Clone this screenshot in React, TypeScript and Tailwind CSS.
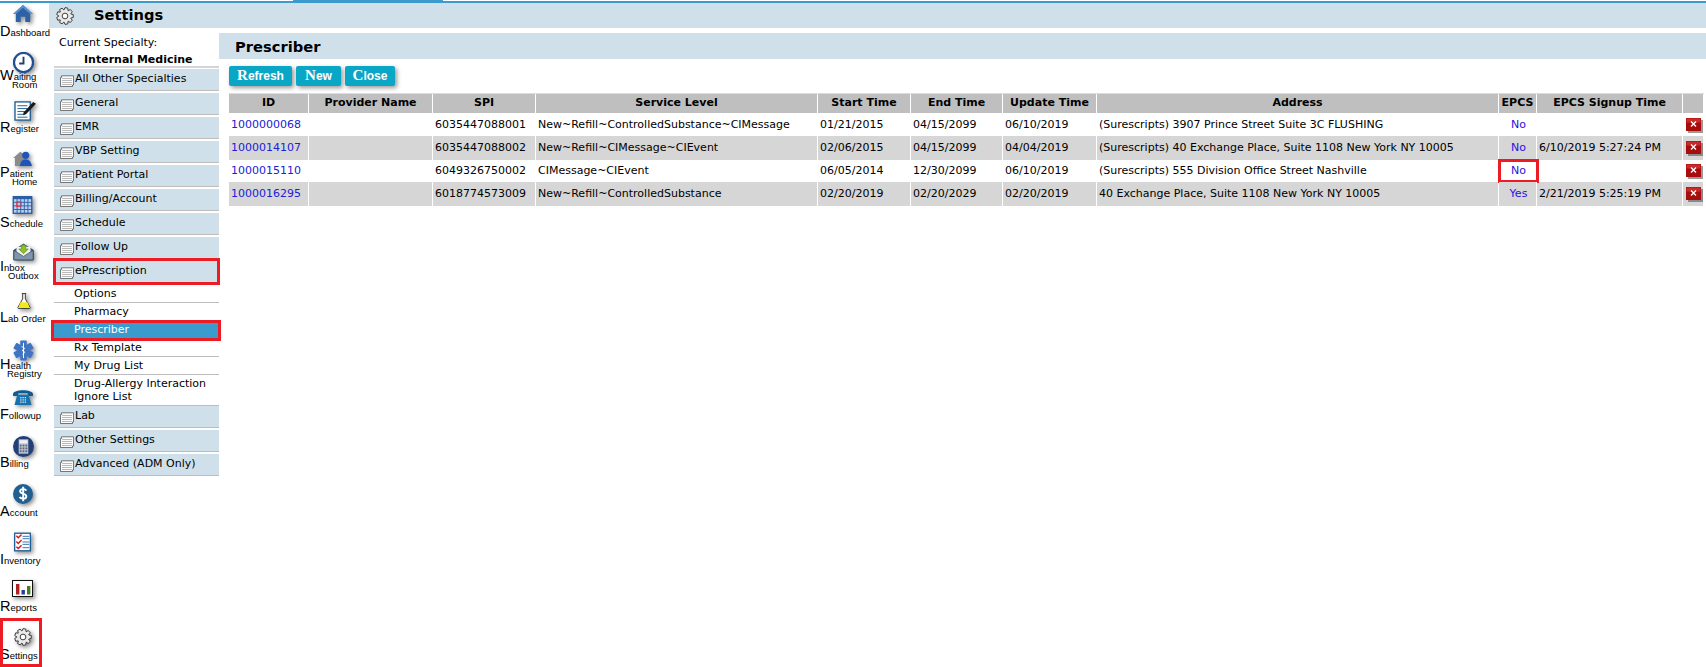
import type { ReactNode } from "react";

const verdana = "font-['DejaVu_Sans',Verdana,sans-serif]";

function Gear({ size = 24 }: { size?: number }) {
  const pts: string[] = [];
  const teeth = 9;
  for (let i = 0; i < teeth; i++) {
    const a = (i / teeth) * Math.PI * 2;
    const w = Math.PI / teeth;
    const p = (r: number, t: number) =>
      `${(12 + r * Math.cos(t)).toFixed(2)},${(12 + r * Math.sin(t)).toFixed(2)}`;
    pts.push(p(8.2, a - w * 0.95), p(11.2, a - w * 0.5), p(11.2, a + w * 0.5), p(8.2, a + w * 0.95));
  }
  return (
    <svg width={size} height={size} viewBox="0 0 24 24">
      <polygon points={pts.join(" ")} fill="#e8e8e8" stroke="#3a3a3a" strokeWidth="1.3" strokeLinejoin="round" />
      <circle cx="12" cy="12" r="3.8" fill="#fff" stroke="#3a3a3a" strokeWidth="1.3" />
    </svg>
  );
}

function HomeIcon() {
  return (
    <svg width="20" height="18" viewBox="0 0 22 20">
      <path d="M11 0 L22 10 L19 10 L19 19 L13.5 19 L13.5 13 L8.5 13 L8.5 19 L3 19 L3 10 L0 10 Z" fill="#2d62a6" />
      <path d="M11 0 L22 10 L19 10 L11 3 L3 10 L0 10 Z" fill="#5b8fd0" />
    </svg>
  );
}

function ClockIcon() {
  return (
    <svg width="21" height="21" viewBox="0 0 22 22">
      <circle cx="11" cy="11" r="10" fill="#fff" stroke="#1f4e96" strokeWidth="2.4" />
      <path d="M11 5 V12 H6.5" fill="none" stroke="#1f3f78" strokeWidth="2" />
    </svg>
  );
}

function RegisterIcon() {
  return (
    <svg width="23" height="21" viewBox="0 0 24 22">
      <rect x="1" y="2" width="16" height="19" fill="#fff" stroke="#1f5e96" strokeWidth="1.4" />
      <path d="M3.5 6 H14 M3.5 9 H14 M3.5 12 H14 M3.5 15 H11 M3.5 18 H14" stroke="#1f5e96" strokeWidth="1" />
      <path d="M10 13 L20 2 L23 4 L12.5 15 L9.5 16 Z" fill="#1a1a1a" />
    </svg>
  );
}

function PatientIcon() {
  return (
    <svg width="20" height="17" viewBox="0 0 22 19">
      <path d="M0 9 L8 2 L14 7 V18 H2 V9 Z" fill="#8b8b8b" />
      <circle cx="14" cy="6" r="4" fill="#1d55b8" />
      <path d="M7.5 18 C8 12 11 10.5 14 10.5 C17 10.5 20 12 21 18 Z" fill="#1d55b8" />
    </svg>
  );
}

function CalendarIcon() {
  return (
    <svg width="21" height="18" viewBox="0 0 22 20">
      <rect x="0" y="0" width="22" height="20" fill="#2a5fa8" />
      {[0, 1, 2, 3].map((r) =>
        [0, 1, 2, 3, 4].map((c) => (
          <rect key={`${r}-${c}`} x={1.5 + c * 4} y={3.5 + r * 4} width="3" height="3" fill="#b8d0ee" />
        ))
      )}
      <rect x="4.5" y="6.5" width="5" height="5" fill="none" stroke="#e8364a" strokeWidth="1" />
    </svg>
  );
}

function InboxIcon() {
  return (
    <svg width="21" height="18" viewBox="0 0 24 20">
      <path d="M1 8 L12 1 L23 8 V19 H1 Z" fill="#4a6688" stroke="#22344c" />
      <path d="M4 4 H20 V12 L12 16 L4 12 Z" fill="#f2f2f2" />
      <path d="M1 8 L12 15 L23 8 V19 H1 Z" fill="#7f95ad" stroke="#22344c" strokeWidth="0.7" />
      <path d="M9.5 2 H14.5 V6.5 H17.5 L12 12 L6.5 6.5 H9.5 Z" fill="#8cc21e" stroke="#4b7a10" strokeWidth="0.6" />
    </svg>
  );
}

function FlaskIcon() {
  return (
    <svg width="14" height="18" viewBox="0 0 16 19">
      <path d="M5.5 1 H10.5 M6.5 1 V7 L1 17 Q0.8 18 2 18 H14 Q15.2 18 15 17 L9.5 7 V1" fill="#fff" stroke="#222" strokeWidth="1" />
      <path d="M4 11 H12 L14.5 17.5 H1.5 Z" fill="#f2ea16" />
    </svg>
  );
}

function StarIcon() {
  return (
    <svg width="21" height="21" viewBox="0 0 22 22">
      {[0, 60, 120].map((a) => (
        <rect key={a} x="7.6" y="0.5" width="6.8" height="21" rx="0.8" fill="#3e74c4" transform={`rotate(${a} 11 11)`} />
      ))}
      <path d="M11 3 V19 M9 7 C13 8 13 9.5 9.5 11 C13 12 13 13.5 10 15" fill="none" stroke="#fff" strokeWidth="1" />
    </svg>
  );
}

function PhoneIcon() {
  return (
    <svg width="22" height="18" viewBox="0 0 22 19">
      <path d="M0.5 6 C1 1 21 1 21.5 6 L21.5 8.5 L16 8.5 L16 5.5 H6 V8.5 L0.5 8.5 Z" fill="#0f5c94" />
      <path d="M5 7 H17 L20 18 H2 Z" fill="#1672ae" />
      {[0, 1, 2].map((r) =>
        [0, 1, 2].map((c) => <rect key={`${r}-${c}`} x={8 + c * 2.4} y={9.5 + r * 2.4} width="1.4" height="1.4" fill="#cfe6f6" />)
      )}
    </svg>
  );
}

function CalculatorIcon() {
  return (
    <svg width="21" height="21" viewBox="0 0 22 22">
      <circle cx="11" cy="11" r="11" fill="#233f78" />
      <rect x="6" y="3.5" width="10" height="15" fill="#c6ccd8" />
      <rect x="7" y="4.5" width="8" height="3" fill="#eef0f5" />
      {[0, 1, 2].map((r) =>
        [0, 1, 2].map((c) => <rect key={`${r}-${c}`} x={7 + c * 3} y={9 + r * 3} width="2" height="2" fill="#5b6478" />)
      )}
    </svg>
  );
}

function CoinIcon() {
  return (
    <svg width="20" height="20" viewBox="0 0 21 21">
      <circle cx="10.5" cy="10.5" r="10.5" fill="#1f5f92" />
      <path d="M14 7 C13 4.8 7.5 4.8 7.5 7.6 C7.5 10.8 14 9.6 14 13 C14 16 8 16 7 13.6 M10.7 3 V18" fill="none" stroke="#fff" strokeWidth="2" />
    </svg>
  );
}

function ChecklistIcon() {
  return (
    <svg width="17" height="20" viewBox="0 0 18 20">
      <rect x="0.7" y="0.7" width="16.6" height="18.6" fill="#fff" stroke="#1f5e96" strokeWidth="1.4" />
      <path d="M9 4 H16 M9 6.5 H16 M9 10 H16 M9 12.5 H16 M9 16 H16" stroke="#1f5e96" strokeWidth="0.9" />
      <path d="M2.5 3.5 L4.5 5.5 L8 2 M2.5 9.5 L4.5 11.5 L8 8 M2.5 15 L4.5 17 L8 13.5" fill="none" stroke="#d01818" strokeWidth="1.5" />
    </svg>
  );
}

function ChartIcon() {
  return (
    <svg width="21" height="17" viewBox="0 0 21 17">
      <rect x="0.5" y="0.5" width="20" height="16" fill="#fff" stroke="#111" />
      <rect x="4" y="4" width="3.4" height="10.5" fill="#b02020" />
      <rect x="9.5" y="10" width="3.4" height="4.5" fill="#2a3a96" />
      <rect x="15" y="6" width="3.4" height="8.5" fill="#4c7a22" />
    </svg>
  );
}

function FolderIcon() {
  return (
    <svg width="14" height="12" viewBox="0 0 14 12" className="block shrink-0">
      <path d="M0.5 2.5 H1.5 V0.8 H13.5 V10 H12.5 V11.5 H0.5 Z" fill="#fbfbfb" stroke="#555" strokeWidth="0.8" />
      <path d="M2 3.5 H12 M2 5.5 H12 M2 7.5 H12 M2 9.5 H12" stroke="#a8a8a8" strokeWidth="0.8" />
    </svg>
  );
}

function DeleteIcon() {
  return (
    <svg width="17" height="15" viewBox="0 0 17 15" className="ml-[1px] block">
      <rect x="2" y="2" width="15" height="13" fill="#555" opacity="0.6" />
      <rect x="0" y="0" width="15" height="13" fill="#a80d0d" />
      <rect x="0.5" y="0.5" width="14" height="4" fill="#c92a2a" />
      <path d="M5 3.5 L10 8.5 M10 3.5 L5 8.5" stroke="#fff" strokeWidth="1.4" />
    </svg>
  );
}

type RailItem = {
  first: string;
  rest: string;
  second?: string;
  secondClass?: string;
  icon: ReactNode;
  iconClass: string;
  labelClass: string;
};

const railItems: RailItem[] = [
  { first: "D", rest: "ashboard", icon: <HomeIcon />, iconClass: "ml-[13px] h-[23px] pt-[2px]", labelClass: "mt-0" },
  { first: "W", rest: "aiting", second: "Room", secondClass: "ml-[12px]", icon: <ClockIcon />, iconClass: "ml-[13px] h-[20px] pt-[1px]", labelClass: "mt-[-1px]" },
  { first: "R", rest: "egister", icon: <RegisterIcon />, iconClass: "ml-[14px] h-[22px] pt-[1px]", labelClass: "mt-[1px]" },
  { first: "P", rest: "atient", second: "Home", secondClass: "ml-[12px]", icon: <PatientIcon />, iconClass: "ml-[13px] h-[22px] pt-[3px]", labelClass: "mt-[-2px]" },
  { first: "S", rest: "chedule", icon: <CalendarIcon />, iconClass: "ml-[12px] h-[22px] pt-[1px]", labelClass: "mt-0" },
  { first: "I", rest: "nbox", second: "Outbox", secondClass: "ml-[8px]", icon: <InboxIcon />, iconClass: "ml-[13px] h-[18px] pt-0", labelClass: "mt-0" },
  { first: "L", rest: "ab Order", icon: <FlaskIcon />, iconClass: "ml-[17px] h-[21px] pt-[1px]", labelClass: "mt-0" },
  { first: "H", rest: "ealth", second: "Registry", secondClass: "ml-[7px]", icon: <StarIcon />, iconClass: "ml-[13px] h-[20px] pt-[1px]", labelClass: "mt-0" },
  { first: "F", rest: "ollowup", icon: <PhoneIcon />, iconClass: "ml-[12px] h-[22px] pt-[1px]", labelClass: "mt-0" },
  { first: "B", rest: "illing", icon: <CalculatorIcon />, iconClass: "ml-[13px] h-[22px] pt-[1px]", labelClass: "mt-0" },
  { first: "A", rest: "ccount", icon: <CoinIcon />, iconClass: "ml-[13px] h-[22px] pt-[1px]", labelClass: "mt-[1px]" },
  { first: "I", rest: "nventory", icon: <ChecklistIcon />, iconClass: "ml-[14px] h-[22px] pt-[1px]", labelClass: "mt-[1px]" },
  { first: "R", rest: "eports", icon: <ChartIcon />, iconClass: "ml-[12px] h-[22px] pt-[1px]", labelClass: "mt-0" },
  { first: "S", rest: "ettings", icon: <Gear size={18} />, iconClass: "ml-[14px] h-[22px] pt-[1px]", labelClass: "mt-0" },
];

const menuTop = ["All Other Specialties", "General", "EMR", "VBP Setting", "Patient Portal", "Billing/Account", "Schedule", "Follow Up"];
const menuBottom = ["Lab", "Other Settings", "Advanced (ADM Only)"];

const rows = [
  {
    id: "1000000068",
    spi: "6035447088001",
    level: "New~Refill~ControlledSubstance~CIMessage",
    start: "01/21/2015",
    end: "04/15/2099",
    update: "06/10/2019",
    address: "(Surescripts) 3907 Prince Street Suite 3C FLUSHING",
    epcs: "No",
    signup: "",
  },
  {
    id: "1000014107",
    spi: "6035447088002",
    level: "New~Refill~CIMessage~CIEvent",
    start: "02/06/2015",
    end: "04/15/2099",
    update: "04/04/2019",
    address: "(Surescripts) 40 Exchange Place, Suite 1108 New York NY 10005",
    epcs: "No",
    signup: "6/10/2019 5:27:24 PM",
  },
  {
    id: "1000015110",
    spi: "6049326750002",
    level: "CIMessage~CIEvent",
    start: "06/05/2014",
    end: "12/30/2099",
    update: "06/10/2019",
    address: "(Surescripts) 555 Division Office Street Nashville",
    epcs: "No",
    signup: "",
    flagged: true,
  },
  {
    id: "1000016295",
    spi: "6018774573009",
    level: "New~Refill~ControlledSubstance",
    start: "02/20/2019",
    end: "02/20/2029",
    update: "02/20/2019",
    address: "40 Exchange Place, Suite 1108 New York NY 10005",
    epcs: "Yes",
    signup: "2/21/2019 5:25:19 PM",
  },
];

const headers = [
  { label: "ID", width: "w-[80px]" },
  { label: "Provider Name", width: "w-[124px]" },
  { label: "SPI", width: "w-[103px]" },
  { label: "Service Level", width: "w-[282px]" },
  { label: "Start Time", width: "w-[93px]" },
  { label: "End Time", width: "w-[92px]" },
  { label: "Update Time", width: "w-[94px]" },
  { label: "Address", width: "w-[402px]" },
  { label: "EPCS", width: "w-[38px]" },
  { label: "EPCS Signup Time", width: "w-[146px]" },
  { label: "", width: "w-[21px]" },
];

function ActionButton({ first, rest, width }: { first: string; rest: string; width: string }) {
  return (
    <button className={`${width} h-[20px] rounded-[2px] bg-[#0aa6c6] font-['Liberation_Sans',Arial,sans-serif] text-[12px] font-bold leading-[20px] text-white shadow-[2px_2px_4px_rgba(0,0,0,0.4)]`}>
      <span className="font-['Liberation_Serif',serif] text-[15px] leading-none">{first}</span>
      {rest}
    </button>
  );
}

export default function App() {
  return (
    <div className={`flex h-[667px] w-[1706px] flex-col overflow-hidden bg-white ${verdana} text-[11px] text-black`}>
      {/* top rule with the active tab stub */}
      <div className="h-[3px] shrink-0 border-b-2 border-[#3b9bcc]">
        <div className="ml-[293px] h-[3px] w-[150px] bg-[#3b9bcc]" />
      </div>

      <div className="flex min-h-0 flex-1">
        <nav className="flex w-[49px] shrink-0 flex-col font-['Liberation_Sans',Arial,sans-serif]">
          {railItems.map((item) => (
            <div key={item.first + item.rest} className="relative h-[48px] shrink-0">
              <div className={`${item.iconClass} drop-shadow-[2px_2px_2px_rgba(0,0,0,0.45)]`}>{item.icon}</div>
              <div className={`${item.labelClass} whitespace-nowrap text-[9.5px] leading-[10px]`}>
                <span className="text-[14.5px] leading-[11px]">{item.first}</span>
                {item.rest}
                {item.second && <div className={`${item.secondClass} leading-[6px]`}>{item.second}</div>}
              </div>
              {item.rest === "ettings" && (
                <div className="absolute -top-[9px] left-0 h-[49px] w-[42px] border-3 border-[#ed1c24]" />
              )}
            </div>
          ))}
        </nav>

        <div className="flex min-w-0 flex-1 flex-col">
          <header className="flex h-[25px] shrink-0 items-center bg-[#cfe0ea]">
            <div className="ml-[7px] mr-[20px]">
              <Gear size={18} />
            </div>
            <h1 className="text-[14.7px] font-bold">Settings</h1>
          </header>

          <div className="flex min-h-0 flex-1">
            <aside className="ml-[5px] w-[165px] shrink-0">
              <div className="pl-[5px] pt-[8px] leading-[13px]">Current Specialty:</div>
              <div className="mt-[4px] border-b-2 border-[#d4d4d4] pl-[30px] font-bold leading-[13px]">Internal Medicine</div>
              <div className="mt-[1px]">
                {menuTop.map((m) => (
                  <MenuHead key={m} label={m} />
                ))}
                <MenuHead label="ePrescription" flagged />
                <SubItem label="Options" />
                <SubItem label="Pharmacy" />
                <SubItem label="Prescriber" active />
                <SubItem label="Rx Template" />
                <SubItem label="My Drug List" />
                <SubItem label={"Drug-Allergy Interaction\nIgnore List"} />
                {menuBottom.map((m) => (
                  <MenuHead key={m} label={m} />
                ))}
              </div>
            </aside>

            <main className="min-w-0 flex-1 pt-[5px]">
              <div className="flex h-[26px] items-center bg-[#cfe0ea] pl-[16px] pt-[2px] text-[14.7px] font-bold">Prescriber</div>
              <div className="ml-[10px] mt-[7px] flex gap-[4px]">
                <ActionButton first="R" rest="efresh" width="w-[63px]" />
                <ActionButton first="N" rest="ew" width="w-[45px]" />
                <ActionButton first="C" rest="lose" width="w-[50px]" />
              </div>
              <table className="ml-[10px] mt-[7px] w-[1475px] table-fixed border-separate border-spacing-0 border-t border-[#dcdcdc]">
                <thead>
                  <tr>
                    {headers.map((h) => (
                      <th key={h.label} className={`${h.width} h-[20px] border-r border-b border-white bg-[#bfbfbf] p-0 text-center font-bold`}>
                        {h.label}
                      </th>
                    ))}
                  </tr>
                </thead>
                <tbody>
                  {rows.map((r, i) => {
                    const bg = i % 2 === 1 ? "bg-[#d6d6d6] h-[24px]" : "bg-white h-[22px]";
                    const cell = `${bg} border-r border-white p-0 pl-[2px] whitespace-nowrap`;
                    return (
                      <tr key={r.id}>
                        <td className={cell}>
                          <a className="text-[#2020d8]">{r.id}</a>
                        </td>
                        <td className={cell} />
                        <td className={cell}>{r.spi}</td>
                        <td className={cell}>{r.level}</td>
                        <td className={cell}>{r.start}</td>
                        <td className={cell}>{r.end}</td>
                        <td className={cell}>{r.update}</td>
                        <td className={cell}>{r.address}</td>
                        <td className={`${cell} relative text-center text-[#2a10e0]`}>
                          {r.epcs}
                          {r.flagged && <div className="absolute -bottom-[1px] -left-[1px] -right-[3px] -top-[1px] border-3 border-[#ed1c24]" />}
                        </td>
                        <td className={cell}>{r.signup}</td>
                        <td className={cell}>
                          <DeleteIcon />
                        </td>
                      </tr>
                    );
                  })}
                </tbody>
              </table>
            </main>
          </div>
        </div>
      </div>
    </div>
  );
}

function MenuHead({ label, flagged }: { label: string; flagged?: boolean }) {
  return (
    <div className="relative mb-[2px] flex h-[22px] items-start gap-[1px] border-b border-[#bdbdbd] bg-[#cfe0ea] pl-[6px] pt-[3px] leading-[14px]">
      <span className="mt-[3px]">
        <FolderIcon />
      </span>
      <span>{label}</span>
      {flagged && <div className="absolute -bottom-[3px] -left-[1px] -right-[1px] -top-[3px] border-3 border-[#ed1c24]" />}
    </div>
  );
}

function SubItem({ label, active }: { label: string; active?: boolean }) {
  return (
    <div
      className={`relative whitespace-pre-line border-b border-[#bdbdbd] py-[2px] pl-[20px] leading-[13px] ${
        active ? "bg-[#3b9bcc] text-white" : ""
      }`}
    >
      {label}
      {active && <div className="absolute -bottom-[3px] -left-[3px] -right-[2px] -top-[1px] border-3 border-[#ed1c24]" />}
    </div>
  );
}
